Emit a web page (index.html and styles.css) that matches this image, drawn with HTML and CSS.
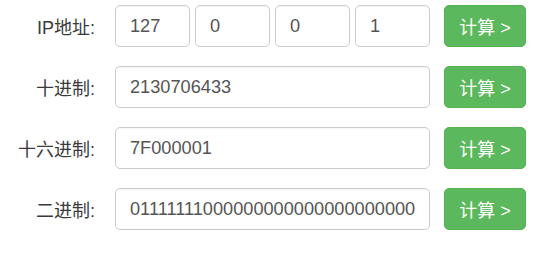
FILE: index.html
```html
<!DOCTYPE html>
<html lang="zh-CN">
<head>
<meta charset="utf-8">
<title>IP地址转换</title>
<link rel="stylesheet" href="styles.css">
</head>
<body>
<form class="converter">
  <div class="row">
    <label class="label">IP地址:</label>
    <div class="field ip-group">
      <input class="input ip" type="text" value="127">
      <input class="input ip" type="text" value="0">
      <input class="input ip" type="text" value="0">
      <input class="input ip" type="text" value="1">
    </div>
    <button class="btn" type="button">计算 &gt;</button>
  </div>
  <div class="row">
    <label class="label">十进制:</label>
    <div class="field"><input class="input wide" type="text" value="2130706433"></div>
    <button class="btn" type="button">计算 &gt;</button>
  </div>
  <div class="row">
    <label class="label">十六进制:</label>
    <div class="field"><input class="input wide" type="text" value="7F000001"></div>
    <button class="btn" type="button">计算 &gt;</button>
  </div>
  <div class="row">
    <label class="label">二进制:</label>
    <div class="field"><input class="input wide" type="text" value="01111111000000000000000000000001"></div>
    <button class="btn" type="button">计算 &gt;</button>
  </div>
</form>
</body>
</html>
```
FILE: styles.css
```css
html, body {
  margin: 0;
  padding: 0;
  background: #fff;
}
body {
  font-family: "Liberation Sans", "Noto Sans CJK SC", sans-serif;
  font-size: 18px;
  color: #333;
}
.converter {
  display: flex;
  flex-direction: column;
  gap: 19px;
  padding-top: 5px;
}
.row {
  display: flex;
  align-items: center;
  height: 42px;
}
.label {
  width: 95px;
  text-align: right;
  margin-right: 20px;
  color: #3a3a3a;
  font-size: 18px;
  white-space: nowrap;
}
.field {
  width: 315px;
  display: flex;
  margin-right: 14px;
}
.ip-group {
  gap: 5px;
}
.input {
  box-sizing: border-box;
  height: 42px;
  border: 1px solid #ccc;
  border-radius: 5px;
  padding: 0 14px;
  font-family: "Liberation Sans", "Noto Sans CJK SC", sans-serif;
  font-size: 18.2px;
  color: #555;
  background: #fff;
  outline: none;
  box-shadow: inset 0 1px 1px rgba(0,0,0,0.04);
}
.ip {
  width: 75px;
}
.wide {
  width: 315px;
}
.btn {
  box-sizing: border-box;
  width: 82px;
  height: 42px;
  border: 1px solid #53b353;
  border-radius: 5px;
  background: #5cb85c;
  color: #fff;
  font-family: "Liberation Sans", "Noto Sans CJK SC", sans-serif;
  font-size: 18px;
  padding: 0;
  cursor: pointer;
}
```
